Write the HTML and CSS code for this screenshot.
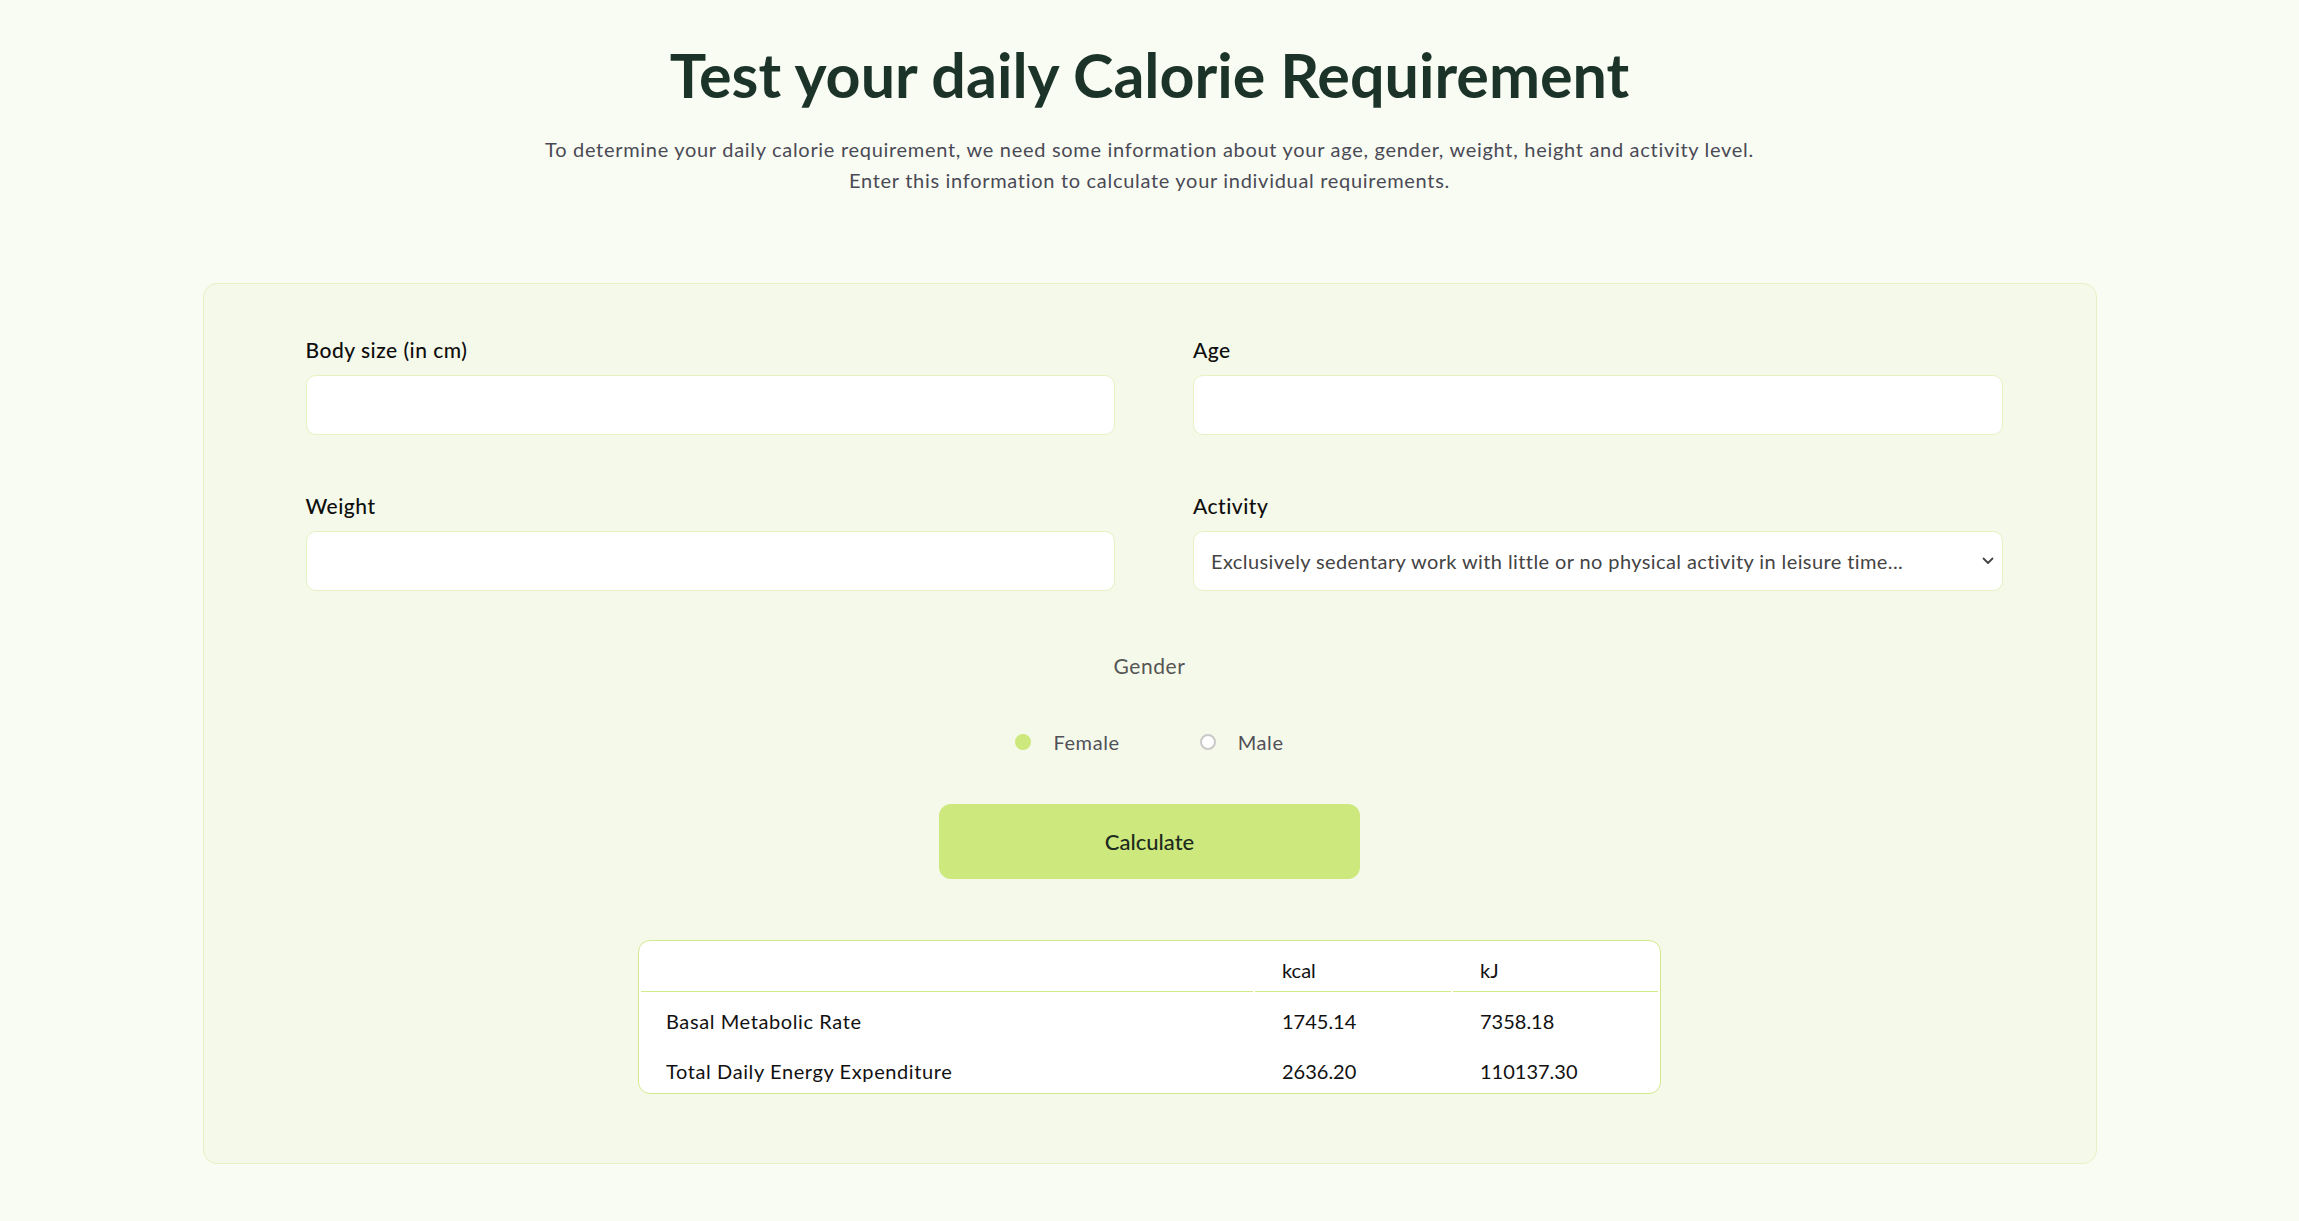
FILE: index.html
```html
<!DOCTYPE html>
<html lang="en">
<head>
<meta charset="utf-8">
<title>Calorie Requirement</title>
<link rel="stylesheet" href="styles.css">
</head>
<body>
<main class="page">
  <header class="intro">
    <h1 class="title">Test your daily Calorie Requirement</h1>
    <p class="lead">To determine your daily calorie requirement, we need some information about your age, gender, weight, height and activity level.<br>Enter this information to calculate your individual requirements.</p>
  </header>

  <section class="card">
    <div class="fields">
      <div class="field">
        <label class="label" for="size">Body size (in cm)</label>
        <input class="control" id="size" type="text">
      </div>
      <div class="field">
        <label class="label" for="age">Age</label>
        <input class="control" id="age" type="text">
      </div>
      <div class="field">
        <label class="label" for="weight">Weight</label>
        <input class="control" id="weight" type="text">
      </div>
      <div class="field">
        <label class="label" for="activity">Activity</label>
        <div class="select-wrap">
          <select class="control select" id="activity">
            <option>Exclusively sedentary work with little or no physical activity in leisure time...</option>
          </select>
          <svg class="chevron" width="12" height="8" viewBox="0 0 12 8" aria-hidden="true">
            <path d="M1.5 1.5 L6 6 L10.5 1.5" fill="none" stroke="#444" stroke-width="1.8" stroke-linecap="round" stroke-linejoin="round"/>
          </svg>
        </div>
      </div>
    </div>

    <div class="gender">
      <div class="gender-title">Gender</div>
      <div class="radios">
        <label class="radio"><input class="radio-input" type="radio" name="gender" checked><span class="radio-text">Female</span></label>
        <label class="radio"><input class="radio-input" type="radio" name="gender"><span class="radio-text">Male</span></label>
      </div>
    </div>

    <div class="actions">
      <button class="calc" type="button">Calculate</button>
    </div>

    <table class="results">
      <thead>
        <tr>
          <th class="col-name"></th>
          <th class="col-kcal">kcal</th>
          <th class="col-kj">kJ</th>
        </tr>
      </thead>
      <tbody>
        <tr>
          <td class="cell-name">Basal Metabolic Rate</td>
          <td>1745.14</td>
          <td>7358.18</td>
        </tr>
        <tr>
          <td class="cell-name">Total Daily Energy Expenditure</td>
          <td>2636.20</td>
          <td>110137.30</td>
        </tr>
      </tbody>
    </table>
  </section>
</main>
</body>
</html>
```

FILE: styles.css
```css
* {
  box-sizing: border-box;
}

html,
body {
  margin: 0;
  padding: 0;
}

body {
  background: #f9fcf2;
  font-family: "Lato", "Liberation Sans", sans-serif;
  color: #111;
}

.page {
  padding-bottom: 59px;
}

.intro {
  padding-top: 38px;
  text-align: center;
}

.title {
  margin: 0;
  font-size: 61px;
  line-height: 73px;
  font-weight: 700;
  color: #1b3328;
}

.lead {
  margin: 23px 0 0;
  font-size: 20px;
  line-height: 31px;
  font-weight: 400;
  letter-spacing: 0.7px;
  color: #4a4a56;
}

.card {
  width: 1894px;
  margin: 87px auto 0;
  padding: 54px 0 69px;
  background: #f5f9e9;
  border: 1px solid #e6f2c1;
  border-radius: 14px;
}

.fields {
  display: grid;
  grid-template-columns: 1fr 1fr;
  column-gap: 78px;
  row-gap: 59px;
  padding: 0 93px 0 102px;
}

.field {
  display: flex;
  flex-direction: column;
}

.label {
  display: block;
  margin-bottom: 13px;
  font-size: 21px;
  line-height: 24px;
  font-weight: 500;
  letter-spacing: 0.5px;
  color: #0e0e0e;
}

.control {
  display: block;
  width: 100%;
  height: 60px;
  margin: 0;
  padding: 0 17px;
  background: #fff;
  border: 1px solid #e6f2c1;
  border-radius: 10px;
  font-family: inherit;
  font-size: 20px;
  letter-spacing: 0.4px;
  font-weight: 400;
  color: #444;
  outline: none;
}

.select-wrap {
  position: relative;
}

.select {
  appearance: none;
  -webkit-appearance: none;
  padding-right: 40px;
}

.chevron {
  position: absolute;
  right: 9px;
  top: 26px;
  pointer-events: none;
}

.gender {
  margin-top: 63px;
  text-align: center;
}

.gender-title {
  font-size: 21px;
  line-height: 24px;
  letter-spacing: 0.6px;
  color: #555;
}

.radios {
  display: flex;
  justify-content: center;
  gap: 80px;
  margin-top: 52px;
}

.radio {
  display: flex;
  align-items: center;
  gap: 22px;
  height: 24px;
}

.radio-input {
  appearance: none;
  -webkit-appearance: none;
  width: 16px;
  height: 16px;
  margin: 0;
  border-radius: 50%;
  border: 2px solid #c9c9c9;
  background: #fff;
}

.radio-input:checked {
  border-color: #cde87c;
  background: #cde87c;
}

.radio-text {
  font-size: 20px;
  line-height: 24px;
  letter-spacing: 0.6px;
  color: #505058;
}

.actions {
  display: flex;
  justify-content: center;
  margin-top: 50px;
}

.calc {
  width: 421px;
  height: 75px;
  border: none;
  border-radius: 12px;
  background: #cde87c;
  font-family: inherit;
  font-size: 22px;
  font-weight: 500;
  color: #1d2b20;
}

.results {
  width: 1023px;
  margin: 61px auto 0;
  background: #fff;
  border: 1px solid #d2ea8c;
  border-radius: 12px;
  border-collapse: separate;
  border-spacing: 2px 0;
  table-layout: fixed;
}

.results th,
.results td {
  padding: 17px 27px 9px;
  font-size: 20px;
  line-height: 24px;
  font-weight: 400;
  text-align: left;
  color: #111;
  white-space: nowrap;
}

.results tbody tr:last-child td {
  padding-bottom: 10px;
}

.results th {
  border-bottom: 1px solid #d2ea8c;
}

.results .cell-name {
  padding-left: 25px;
  letter-spacing: 0.6px;
}

.col-name {
  width: 612px;
}

.col-kcal {
  width: 196px;
}

.col-kj {
  width: 205px;
}
```
